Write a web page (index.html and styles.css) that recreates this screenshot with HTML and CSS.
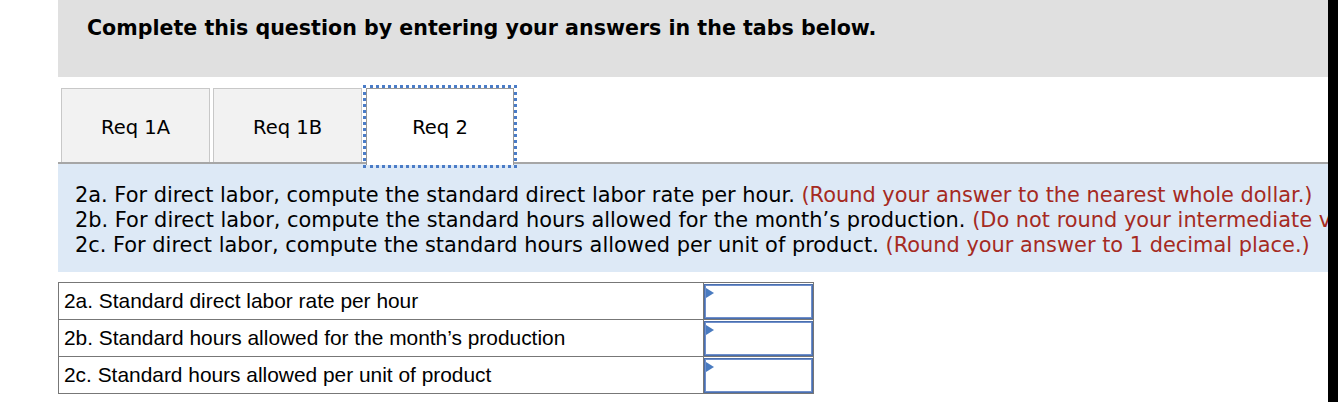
FILE: index.html
```html
<!DOCTYPE html>
<html>
<head>
<meta charset="utf-8">
<link rel="stylesheet" href="styles.css">
</head>
<body>
<div class="gutter"></div>
<main class="content">
  <header class="banner">
    <h1 class="title">Complete this question by entering your answers in the tabs below.</h1>
  </header>
  <nav class="tabs">
    <div class="tab">Req 1A</div>
    <div class="tab">Req 1B</div>
    <div class="tab active">Req 2</div>
  </nav>
  <section class="instructions">
    <p>2a. For direct labor, compute the standard direct labor rate per hour. <span class="note">(Round your answer to the nearest whole dollar.)</span></p>
    <p>2b. For direct labor, compute the standard hours allowed for the month’s production. <span class="note">(Do not round your intermediate values.)</span></p>
    <p>2c. For direct labor, compute the standard hours allowed per unit of product. <span class="note">(Round your answer to 1 decimal place.)</span></p>
  </section>
  <table class="answers">
    <tr><td class="label">2a. Standard direct labor rate per hour</td><td class="cell"><div class="input"></div></td></tr>
    <tr><td class="label">2b. Standard hours allowed for the month’s production</td><td class="cell"><div class="input"></div></td></tr>
    <tr><td class="label">2c. Standard hours allowed per unit of product</td><td class="cell"><div class="input"></div></td></tr>
  </table>
</main>
<div class="edge"></div>
</body>
</html>
```

FILE: styles.css
```css
html, body {
  margin: 0;
  padding: 0;
  height: 100%;
}
body {
  display: flex;
  background: #fff;
  overflow: hidden;
}
.gutter {
  width: 58px;
  flex: none;
}
.content {
  width: 1270px;
  flex: none;
  overflow: hidden;
}
.edge {
  flex: 1;
  background: #000;
}
.banner {
  background: #e0e0e0;
  height: 77px;
  padding: 14px 0 0 29px;
  box-sizing: border-box;
}
.title {
  margin: 0;
  font-family: "DejaVu Sans", Verdana, sans-serif;
  font-weight: bold;
  font-size: 20.6px;
  line-height: 28px;
  color: #000;
  white-space: nowrap;
}
.tabs {
  display: flex;
  padding: 11px 0 0 3px;
  height: 87px;
  box-sizing: border-box;
  border-bottom: 2px solid #a6a6a6;
  gap: 3px;
}
.tab {
  width: 149px;
  height: 74px;
  box-sizing: border-box;
  background: #f2f2f2;
  border: 1px solid #c8c8c8;
  border-bottom: none;
  display: flex;
  align-items: center;
  justify-content: center;
  font-family: "DejaVu Sans", Verdana, sans-serif;
  font-size: 19.5px;
  color: #000;
  padding-top: 3px;
}
.tab.active {
  background: #fff;
  border: 1px solid #999;
  border-bottom: none;
  height: 77px;
  margin-left: 1px;
  width: 148px;
  outline: 3px dotted #4a7cc7;
  outline-offset: 0;
  position: relative;
  z-index: 1;
  padding-top: 1px;
}
.instructions {
  background: #dde9f6;
  padding: 19px 0 14px 17px;
  font-family: "DejaVu Sans", Verdana, sans-serif;
  font-size: 20.9px;
  line-height: 25px;
  color: #000;
  white-space: nowrap;
}
.instructions p {
  margin: 0;
}
.note {
  color: #a52a22;
}
.answers {
  margin-top: 10px;
  border-collapse: collapse;
  width: 756px;
  font-family: "Liberation Sans", Arial, sans-serif;
  font-size: 20.9px;
  color: #000;
}
.answers td {
  border: 1px solid #777;
  padding: 0;
  height: 36px;
}
.label {
  padding-left: 5px !important;
  width: 640px;
}
.cell {
  width: 109px;
}
.input {
  height: 35px;
  box-sizing: border-box;
  border: 2px solid #6f8fcb;
  outline: 1px solid #4a6fae;
  outline-offset: -1px;
  position: relative;
}
.input::before {
  content: "";
  position: absolute;
  left: 0;
  top: 2px;
  border-left: 8px solid #4a7bc0;
  border-top: 5px solid transparent;
  border-bottom: 5px solid transparent;
}
```
